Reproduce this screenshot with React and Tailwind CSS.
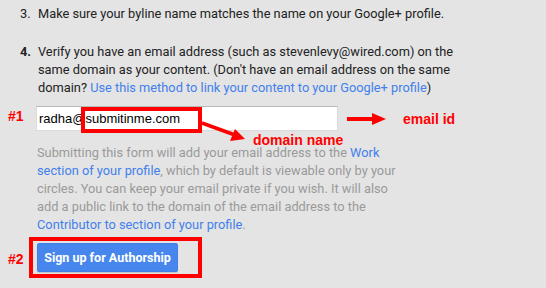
import React from 'react';

const Link = ({ children }) => <span className="text-[#427fed]">{children}</span>;

const App = () => {
  return (
    <div className="relative w-[546px] h-[288px] overflow-hidden bg-[#e4e4e4] text-[12.8px] leading-[18px] text-[#222] font-['Roboto',_'Liberation_Sans',_sans-serif]">
      <div className="pt-[5px] pl-[20px]">
        {/* Step 3 */}
        <div className="flex">
          <span className="w-[18px] shrink-0">3.</span>
          <p>Make sure your byline name matches the name on your Google+ profile.</p>
        </div>

        {/* Step 4 */}
        <div className="flex mt-[20px]">
          <span className="w-[18px] shrink-0 font-bold">4.</span>
          <p className="w-[432px]">
            Verify you have an email address (such as stevenlevy@wired.com) on the same domain as your
            content. (Don't have an email address on the same domain?{' '}
            <Link>Use this method to link your content to your Google+ profile</Link>)
          </p>
        </div>
      </div>

      <div className="pl-[37px]">
        <input
          readOnly
          value="radha@submitinme.com"
          className="block mt-[9px] -ml-px w-[302px] h-[25px] px-[2px] bg-white border border-[#dadada] border-t-[#b9b9b9] text-[13px] text-black font-['Liberation_Sans',_Arial,_sans-serif] outline-none"
        />

        <p className="mt-[13px] w-[370px] text-[#9a9a9a]">
          Submitting this form will add your email address to the <Link>Work section of your profile</Link>,
          which by default is viewable only by your circles. You can keep your email private if you
          wish. It will also add a public link to the domain of the email address to the{' '}
          <Link>Contributor to section of your profile</Link>.
        </p>

        <button className="mt-[9px] w-[141px] h-[29px] rounded-[2px] bg-[#4787ed] border border-[#3f7fe6] text-[12.5px] text-white font-bold shadow-[0_1px_1px_rgba(0,0,0,0.15)]">
          Sign up for Authorship
        </button>
      </div>

      {/* Annotations */}
      <div className="absolute inset-0 pointer-events-none text-[#ff0000] text-[14px] leading-none font-bold font-['Liberation_Sans',_Arial,_sans-serif]">
        <span className="absolute left-[8px] top-[109px]">#1</span>
        <span className="absolute left-[8px] top-[252px]">#2</span>
        <div className="absolute left-[81px] top-[107px] w-[121px] h-[26px] border-[4px] border-[#ff0000]" />
        <div className="absolute left-[29px] top-[237px] w-[173px] h-[41px] border-[4px] border-[#ff0000]" />
        <span className="absolute left-[253px] top-[133px]">domain name</span>
        <span className="absolute left-[403px] top-[112px]">email id</span>
        <svg className="absolute left-0 top-0" width="546" height="288">
          <line x1="202" y1="123" x2="235" y2="135" stroke="#ff0000" strokeWidth="3.5" />
          <polygon points="245,139 230,141 235,129" fill="#ff0000" />
          <rect x="347" y="117" width="27" height="4" fill="#ff0000" />
          <polygon points="372,113 386,119 372,125" fill="#ff0000" />
        </svg>
      </div>
    </div>
  );
};

export default App;
